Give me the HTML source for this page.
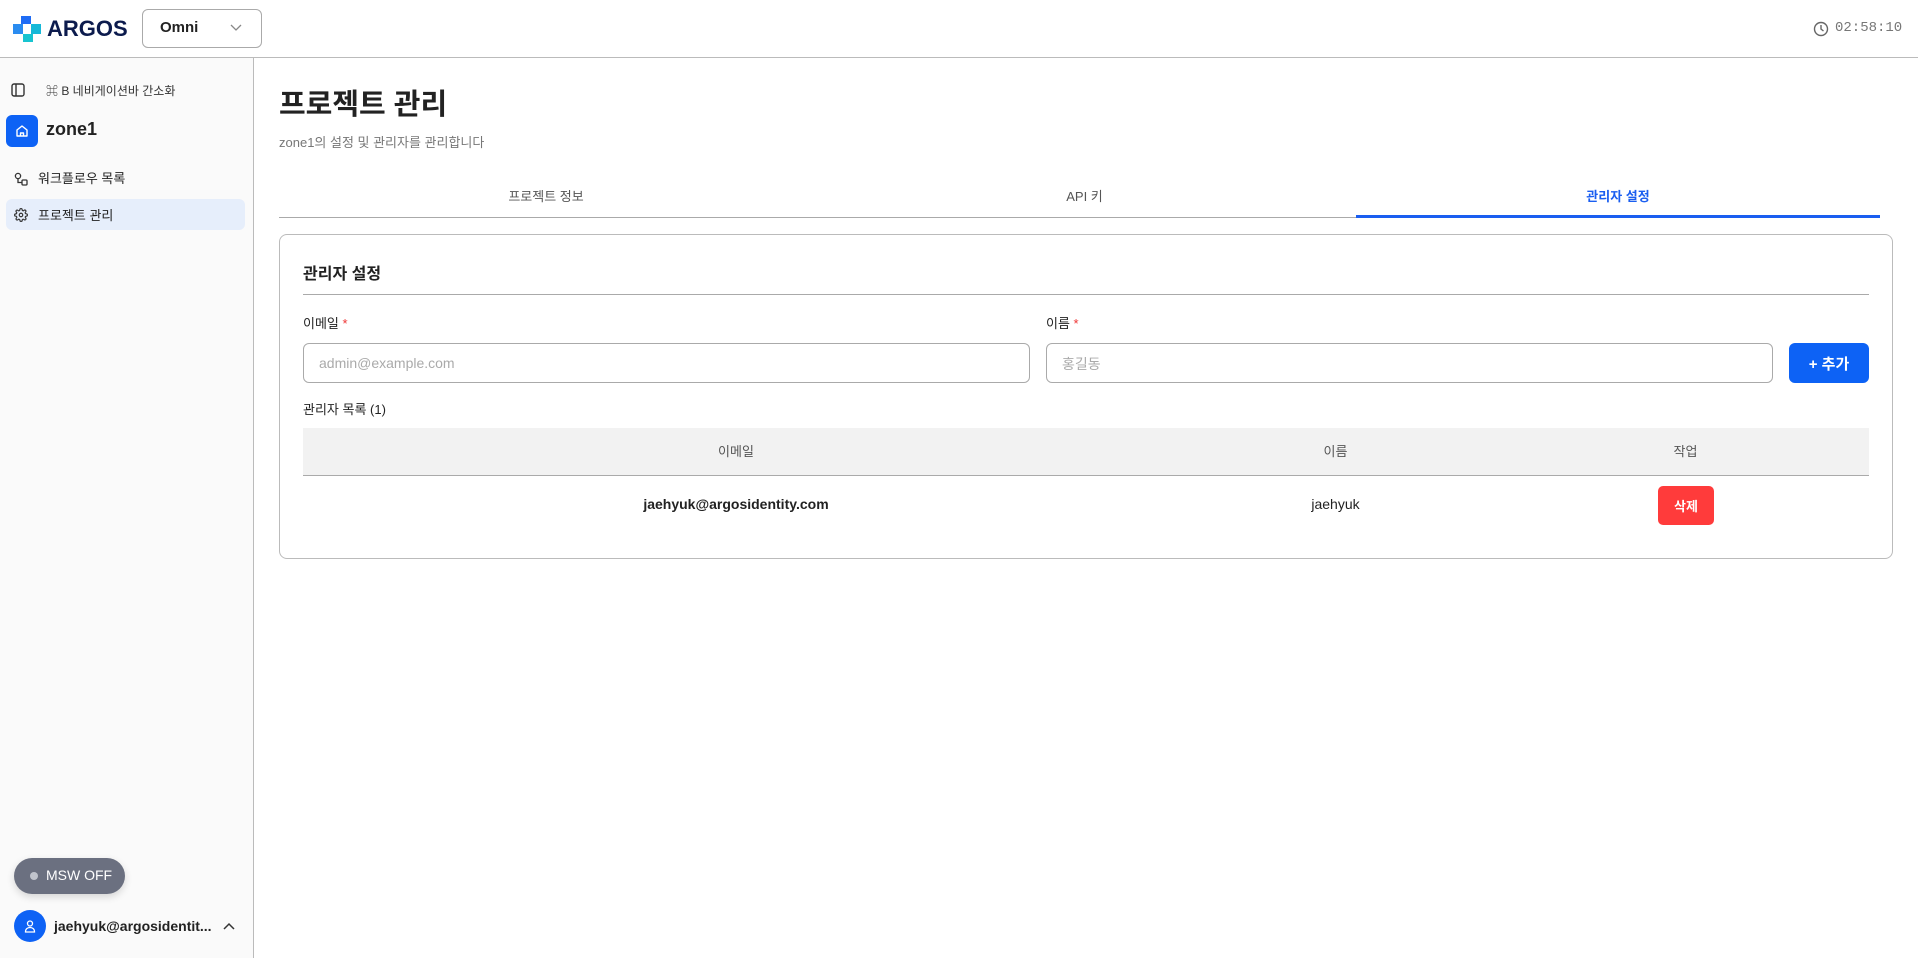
<!DOCTYPE html>
<html><head><meta charset="utf-8"><style>
*{box-sizing:border-box;margin:0;padding:0}
body{width:1918px;height:958px;overflow:hidden;background:#fff;font-family:"Liberation Sans","Noto Sans CJK KR",sans-serif;color:#222;position:relative}
.a{position:absolute}
.c{display:flex;align-items:center;justify-content:center}
</style></head><body>
<div class="a" style="left:0;top:0;width:1918px;height:58px;border-bottom:1px solid #bbb;background:#fff"></div>
<svg class="a" style="left:13px;top:16px" width="30" height="26" viewBox="0 0 30 26"><path d="M8 0h10v8H8z" fill="#1f6cf5"/><path d="M0 8h10v10H0z" fill="#2a8cf0"/><path d="M18 8h10v10H18z" fill="#16b8d8"/><path d="M10 18h10v8H10z" fill="#18c4d0"/><path d="M10 8h8v10h-8z" fill="#fff"/></svg>
<div class="a" style="left:47px;top:16px;font-size:22px;font-weight:900;color:#0c1b4d">ARGOS</div>
<div class="a" style="left:142px;top:9px;width:120px;height:39px;border:1px solid #aaa;border-radius:6px"></div>
<div class="a" style="left:160px;top:19px;font-size:15px;font-weight:bold;color:#222">Omni</div>
<svg class="a" style="left:230px;top:24px" width="12" height="8" viewBox="0 0 12 8"><path d="M1 1l5 5 5-5" stroke="#888" stroke-width="1.3" fill="none"/></svg>
<svg class="a" style="left:1813px;top:21px" width="16" height="16" viewBox="0 0 16 16"><circle cx="8" cy="8" r="6.5" stroke="#666" stroke-width="1.4" fill="none"/><path d="M8 4v4l2.5 2" stroke="#666" stroke-width="1.4" fill="none"/></svg>
<div class="a" style="left:1835px;top:20px;font-family:'Liberation Mono',monospace;font-size:14px;color:#777">02:58:10</div>

<div class="a" style="left:0;top:58px;width:254px;height:900px;background:#fafafa;border-right:1px solid #bbb"></div>
<svg class="a" style="left:11px;top:83px" width="14" height="14" viewBox="0 0 14 14"><rect x="1" y="1" width="12" height="12" rx="2" stroke="#333" stroke-width="1.4" fill="none"/><path d="M5 1v12" stroke="#333" stroke-width="1.4"/></svg>
<div class="a" style="left:46px;top:82px;font-size:12px;color:#333">⌘ B 네비게이션바 간소화</div>
<div class="a c" style="left:6px;top:115px;width:32px;height:32px;background:#0d62f5;border-radius:6px"><svg width="14" height="14" viewBox="0 0 14 14"><path d="M2 6l5-4 5 4v6H2z M5.5 12V9h3v3" stroke="#fff" stroke-width="1.4" fill="none" stroke-linejoin="round"/></svg></div>
<div class="a" style="left:46px;top:119px;font-size:18px;font-weight:bold;color:#222">zone1</div>
<svg class="a" style="left:14px;top:172px" width="14" height="14" viewBox="0 0 14 14"><circle cx="4" cy="4" r="2.6" stroke="#333" stroke-width="1.3" fill="none"/><rect x="8" y="8" width="5" height="5" rx="1" stroke="#333" stroke-width="1.3" fill="none"/><path d="M4 7v3.5h4" stroke="#333" stroke-width="1.3" fill="none"/></svg>
<div class="a" style="left:38px;top:168px;font-size:13px;color:#222">워크플로우 목록</div>
<div class="a" style="left:6px;top:199px;width:239px;height:31px;background:#e6eefb;border-radius:6px"></div>
<svg class="a" style="left:14px;top:208px" width="14" height="14" viewBox="0 0 24 24"><path d="M12 15a3 3 0 100-6 3 3 0 000 6z" stroke="#333" stroke-width="2" fill="none"/><path d="M19.4 15a1.7 1.7 0 00.3 1.8l.1.1a2 2 0 11-2.8 2.8l-.1-.1a1.7 1.7 0 00-1.8-.3 1.7 1.7 0 00-1 1.5V21a2 2 0 11-4 0v-.1a1.7 1.7 0 00-1.1-1.5 1.7 1.7 0 00-1.8.3l-.1.1a2 2 0 11-2.8-2.8l.1-.1a1.7 1.7 0 00.3-1.8 1.7 1.7 0 00-1.5-1H3a2 2 0 110-4h.1a1.7 1.7 0 001.5-1.1 1.7 1.7 0 00-.3-1.8l-.1-.1a2 2 0 112.8-2.8l.1.1a1.7 1.7 0 001.8.3H9a1.7 1.7 0 001-1.5V3a2 2 0 114 0v.1a1.7 1.7 0 001 1.5 1.7 1.7 0 001.8-.3l.1-.1a2 2 0 112.8 2.8l-.1.1a1.7 1.7 0 00-.3 1.8V9a1.7 1.7 0 001.5 1H21a2 2 0 110 4h-.1a1.7 1.7 0 00-1.5 1z" stroke="#333" stroke-width="2" fill="none"/></svg>
<div class="a" style="left:38px;top:205px;font-size:13px;color:#222">프로젝트 관리</div>

<div class="a" style="left:14px;top:858px;width:111px;height:36px;background:#6b7080;border-radius:18px;box-shadow:0 3px 8px rgba(0,0,0,.15)"></div>
<div class="a" style="left:30px;top:872px;width:8px;height:8px;border-radius:50%;background:#c0c3cc"></div>
<div class="a" style="left:46px;top:867px;font-size:14px;color:#fff">MSW OFF</div>
<div class="a c" style="left:14px;top:910px;width:32px;height:32px;border-radius:50%;background:#0d62f5"><svg width="14" height="14" viewBox="0 0 14 14"><circle cx="7" cy="4.5" r="2.5" stroke="#fff" stroke-width="1.3" fill="none"/><path d="M2.5 13c0-3 2-4.5 4.5-4.5s4.5 1.5 4.5 4.5z" stroke="#fff" stroke-width="1.3" fill="none"/></svg></div>
<div class="a" style="left:54px;top:918px;font-size:14px;font-weight:bold;color:#222">jaehyuk@argosidentit...</div>
<svg class="a" style="left:223px;top:922px" width="12" height="8" viewBox="0 0 12 8"><path d="M1 7l5-5 5 5" stroke="#333" stroke-width="1.5" fill="none"/></svg>

<div class="a" style="left:279px;top:81px;font-size:29px;font-weight:bold;color:#222">프로젝트 관리</div>
<div class="a" style="left:279px;top:132px;font-size:13px;color:#777">zone1의 설정 및 관리자를 관리합니다</div>
<div class="a" style="left:279px;top:217px;width:1601px;height:1px;background:#aaa"></div>
<div class="a c" style="left:279px;top:181px;width:534px;height:28px;font-size:13px;color:#555">프로젝트 정보</div>
<div class="a c" style="left:813px;top:181px;width:543px;height:28px;font-size:13px;color:#555">API 키</div>
<div class="a c" style="left:1356px;top:181px;width:524px;height:28px;font-size:13px;color:#1a5ef0;font-weight:bold">관리자 설정</div>
<div class="a" style="left:1356px;top:215px;width:524px;height:3px;background:#1a5ef0"></div>

<div class="a" style="left:279px;top:234px;width:1614px;height:325px;border:1px solid #bbb;border-radius:8px"></div>
<div class="a" style="left:303px;top:260px;font-size:16px;font-weight:bold;color:#222">관리자 설정</div>
<div class="a" style="left:303px;top:294px;width:1566px;height:1px;background:#aaa"></div>
<div class="a" style="left:303px;top:313px;font-size:13px;color:#222">이메일 <span style="color:#e33">*</span></div>
<div class="a" style="left:1046px;top:313px;font-size:13px;color:#222">이름 <span style="color:#e33">*</span></div>
<div class="a" style="left:303px;top:343px;width:727px;height:40px;border:1px solid #aaa;border-radius:6px;padding:11px 15px;font-size:14px;color:#aaa">admin@example.com</div>
<div class="a" style="left:1046px;top:343px;width:727px;height:40px;border:1px solid #aaa;border-radius:6px;padding:10px 15px;font-size:14px;color:#aaa">홍길동</div>
<div class="a c" style="left:1789px;top:343px;width:80px;height:40px;background:#0d62f5;border-radius:6px;color:#fff;font-size:15px;font-weight:bold">+ 추가</div>
<div class="a" style="left:303px;top:399px;font-size:13px;color:#222">관리자 목록 (1)</div>
<div class="a" style="left:303px;top:428px;width:1566px;height:48px;background:#f2f2f2;border-bottom:1px solid #aaa"></div>
<div class="a c" style="left:303px;top:426px;width:866px;height:48px;font-size:13px;color:#555">이메일</div>
<div class="a c" style="left:1169px;top:426px;width:333px;height:48px;font-size:13px;color:#555">이름</div>
<div class="a c" style="left:1502px;top:426px;width:367px;height:48px;font-size:13px;color:#555">작업</div>
<div class="a c" style="left:303px;top:484px;width:866px;height:40px;font-size:14px;font-weight:bold;color:#222">jaehyuk@argosidentity.com</div>
<div class="a c" style="left:1169px;top:484px;width:333px;height:40px;font-size:14px;color:#222">jaehyuk</div>
<div class="a c" style="left:1658px;top:486px;width:56px;height:39px;background:#ff3b3b;border-radius:5px;color:#fff;font-size:13px;font-weight:bold">삭제</div>
</body></html>
